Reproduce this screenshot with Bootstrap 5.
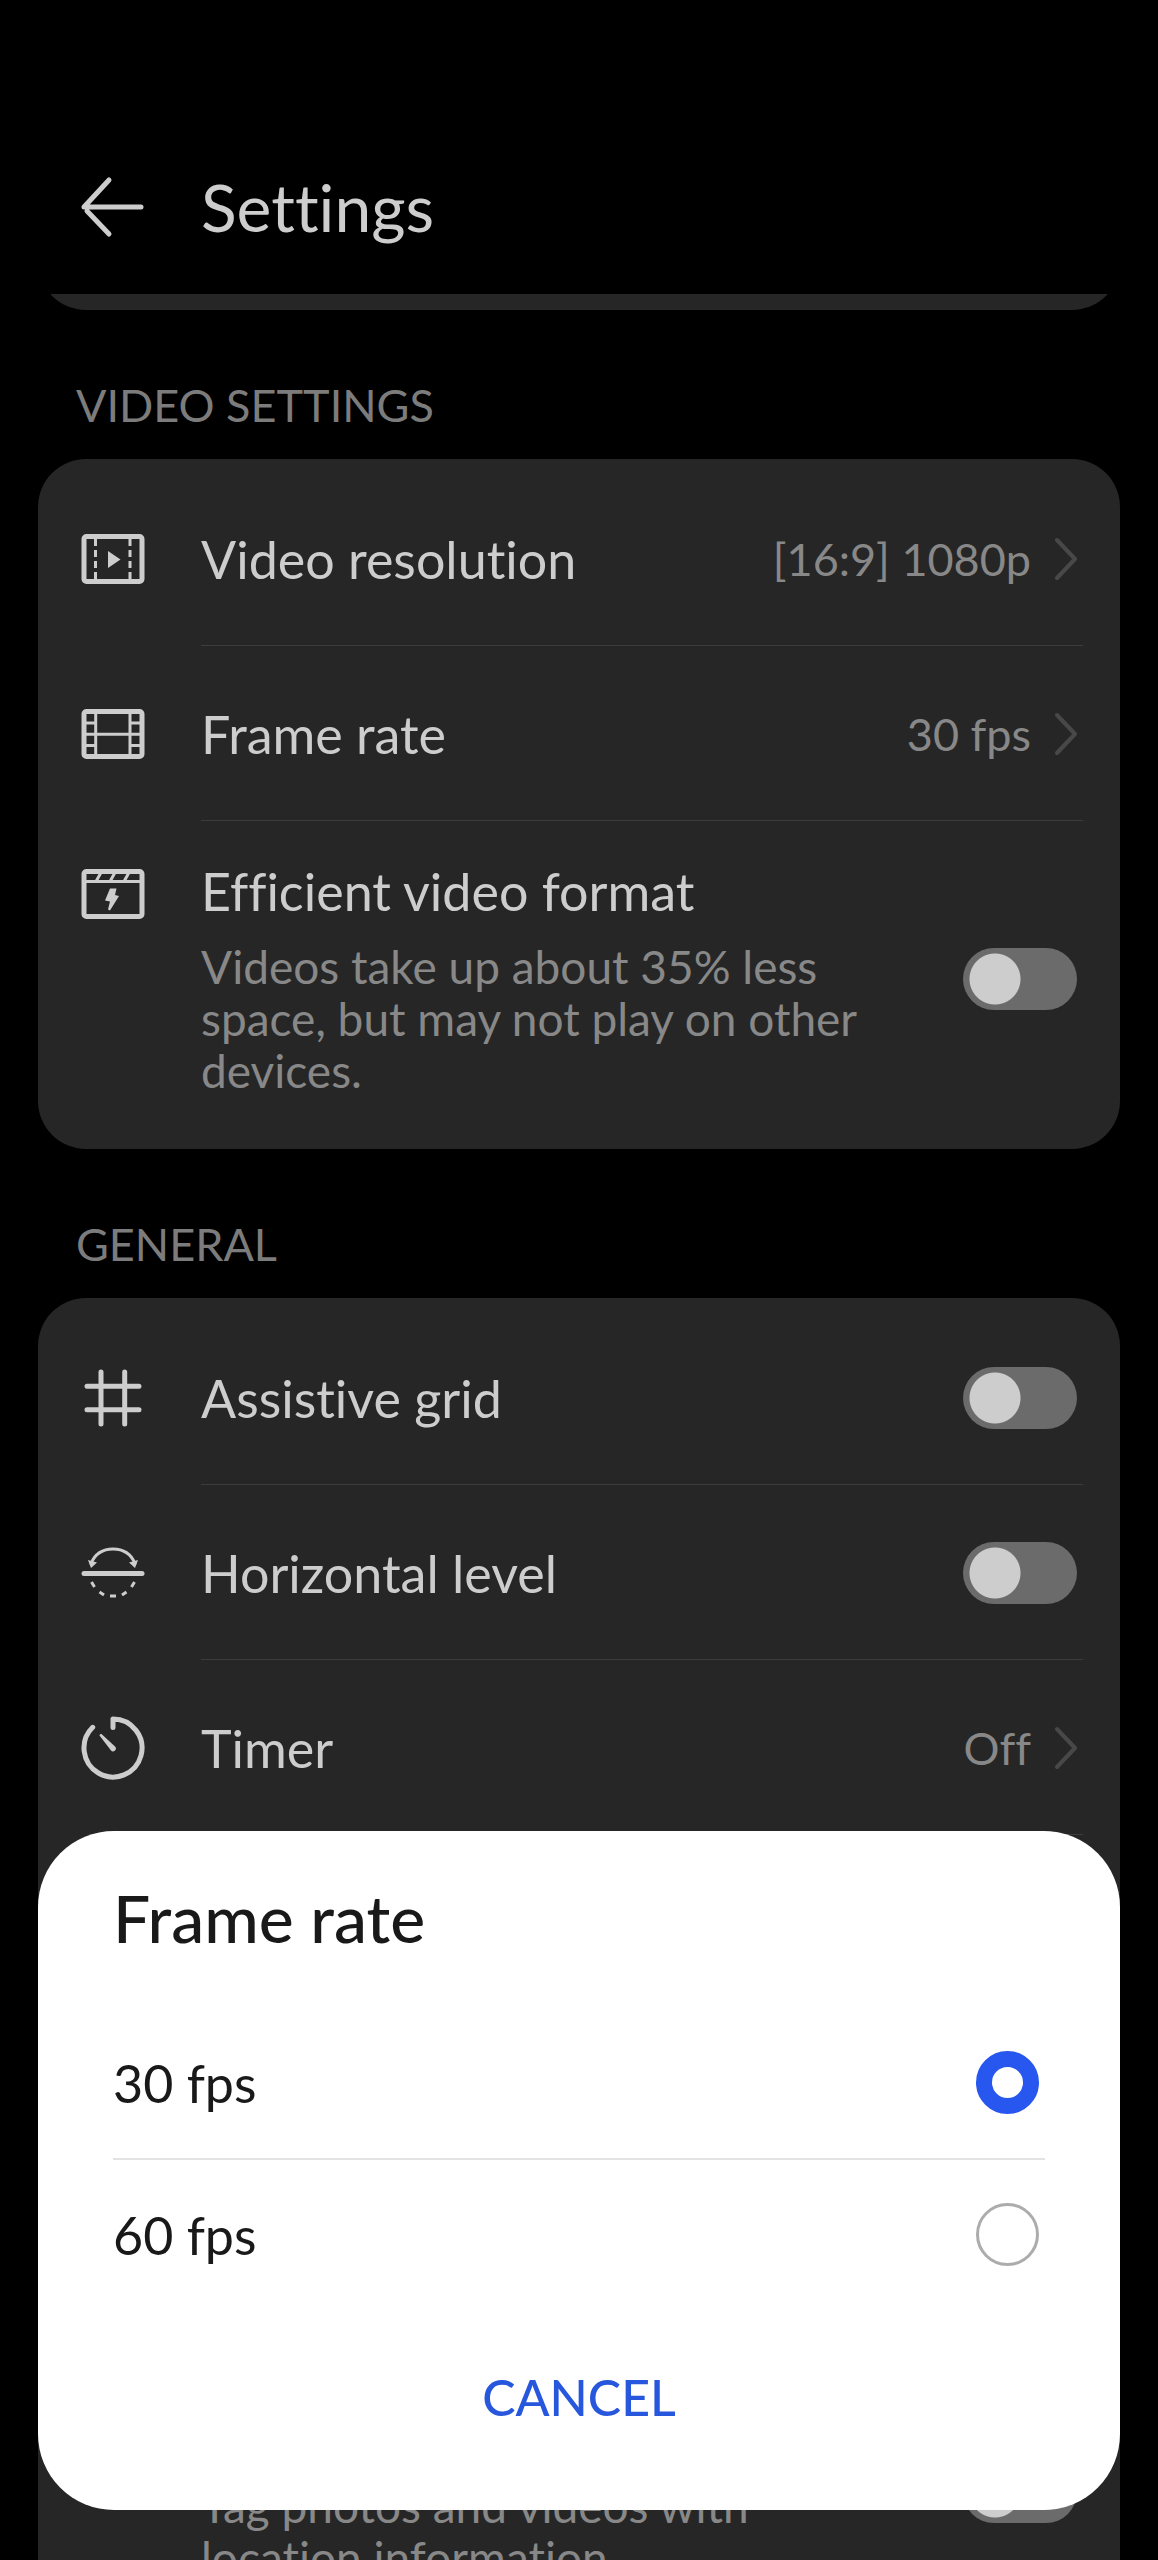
<!DOCTYPE html>
<html lang="en">
<head>
<meta charset="utf-8">
<meta name="viewport" content="width=device-width, initial-scale=1">
<title>Settings</title>
<link href="https://cdn.jsdelivr.net/npm/bootstrap@5.3.0/dist/css/bootstrap.min.css" rel="stylesheet">
<style>
  body { background: #000; color: #cdcdcd; font-family: Lato, "Noto Sans", sans-serif; font-size: 52px; line-height: 60px; }
  body, button { font-variant-ligatures: no-common-ligatures; }
  .app-bar { padding: 119px 81px 0; gap: 56px; height: 294px; }
  .app-title { font-size: 66px; line-height: 80px; font-weight: 400; }
  .panel { background: #262626; border-radius: 48px; margin: 0 38px; padding: 12px 0; }
  .panel-prev { height: 96px; margin-top: -80px; }
  .group-title { color: #7c7c7c; font-size: 45px; line-height: 60px; font-weight: 400; padding: 65px 76px 24px; }
  .setting { padding: 0 37px 0 43px; gap: 56px; }
  .setting-main { min-height: 175px; padding: 2px 6px 0 0; gap: 60px; border: 0; border-bottom: 1px solid #3c3c3c; background: transparent; color: inherit; text-align: left; }
  .setting:last-child .setting-main { border-bottom: 0; }
  .setting-tall .setting-main { padding-top: 40px; padding-bottom: 40px; }
  .setting-tall .glyph { margin-top: 41px; align-self: flex-start; }
  .setting-note { color: #888; font-size: 46px; line-height: 52px; margin-top: 20px; }
  .setting-value { color: #888; font-size: 45px; gap: 24px; }
  .glyph { width: 64px; height: 64px; flex: none; fill: none; stroke: #cdcdcd; stroke-width: 5; stroke-linecap: round; stroke-linejoin: round; }
  .glyph .solid { fill: #cdcdcd; stroke: none; }
  .glyph .thin { stroke-width: 3; stroke-linecap: butt; }
  .chevron { width: 22px; height: 44px; fill: none; stroke: #484848; stroke-width: 4; stroke-linecap: round; stroke-linejoin: round; }
  .form-check-input.toggle { width: 114px; height: 62px; margin: 0; flex: none; border: 0; border-radius: 31px; background: radial-gradient(circle at 32px 31px, #cdcdcd 25px, transparent 26px) #6b6b6b; }
  .sheet { left: 38px; right: 38px; bottom: 50px; background: #fff; color: #191919; border-radius: 76px; padding: 47px 75px 73px; }
  .sheet-title { font-size: 66px; line-height: 80px; font-weight: 500; margin-bottom: 49px; }
  .choice { height: 151px; padding-right: 6px; }
  .choice + .choice { border-top: 2px solid #e3e3e3; }
  .form-check-input.pick { width: 63px; height: 63px; margin: 0; border: 3px solid #acacac; background: #fff; }
  .form-check-input.pick:checked { border: 16px solid #2757ef; background: #fff; }
  .cancel { color: #2757dc; font-size: 50px; line-height: 80px; font-weight: 500; padding: 0; border: 0; margin-top: 48px; }
</style>
</head>
<body>
<div class="vh-100 d-flex flex-column overflow-hidden">
  <header class="app-bar d-flex align-items-center flex-shrink-0">
    <a href="#" class="d-flex" aria-label="Back"><svg class="glyph" viewBox="0 0 64 64"><path d="M60 32H3L28 5M6 36L28 59"/></svg></a>
    <h1 class="app-title m-0">Settings</h1>
  </header>
  <main class="flex-fill overflow-hidden">
    <div class="panel panel-prev"></div>

    <h2 class="group-title m-0">VIDEO SETTINGS</h2>
    <section class="panel">
      <div class="setting d-flex align-items-center">
        <svg class="glyph" viewBox="0 0 64 64"><rect x="3" y="9.500" width="58" height="45" rx="2.500"/><path class="thin" d="M14.500 12v7m0 4v7m0 4v7m0 4v8M49 12v7m0 4v7m0 4v7m0 4v8"/><path class="solid" d="M27 24L39.500 32.500L27 41z"/></svg>
        <button type="button" class="setting-main flex-fill d-flex align-items-center justify-content-between">
          <span>Video resolution</span>
          <span class="setting-value d-flex align-items-center">[16:9] 1080p <svg class="chevron" viewBox="0 0 22 44"><path d="M2 3L20 22L2 41"/></svg></span>
        </button>
      </div>
      <div class="setting d-flex align-items-center">
        <svg class="glyph" viewBox="0 0 64 64"><rect x="3" y="9.500" width="58" height="45" rx="2.500"/><path class="thin" d="M14.700 10v44M49 10v44M4 21h10M49 21h12M4 32.300h57M4 43.500h10M49 43.500h12"/></svg>
        <button type="button" class="setting-main flex-fill d-flex align-items-center justify-content-between">
          <span>Frame rate</span>
          <span class="setting-value d-flex align-items-center">30 fps <svg class="chevron" viewBox="0 0 22 44"><path d="M2 3L20 22L2 41"/></svg></span>
        </button>
      </div>
      <div class="setting setting-tall d-flex align-items-center">
        <svg class="glyph" viewBox="0 0 64 64"><rect x="3" y="9.500" width="58" height="45" rx="2.500"/><path class="thin" d="M4 19.500h56M15 19.500l5-9M29 19.500l5-9M43 19.500l5-9"/><path class="solid" d="M29 26.500h6.500L34 33l4 1L29 48.500L27 47.500L29 39.500L24 38.500z"/></svg>
        <div class="setting-main flex-fill d-flex align-items-center justify-content-between">
          <label for="efficient">Efficient video format<span class="setting-note d-block">Videos take up about 35% less space, but may not play on other devices.</span></label>
          <input class="form-check-input toggle" type="checkbox" role="switch" id="efficient">
        </div>
      </div>
    </section>

    <h2 class="group-title m-0">GENERAL</h2>
    <section class="panel">
      <div class="setting d-flex align-items-center">
        <svg class="glyph" viewBox="0 0 64 64"><path d="M20 6v52M43.700 6v52M6 20.300h52M6 43.700h52"/></svg>
        <div class="setting-main flex-fill d-flex align-items-center justify-content-between">
          <label for="grid">Assistive grid</label>
          <input class="form-check-input toggle" type="checkbox" role="switch" id="grid">
        </div>
      </div>
      <div class="setting d-flex align-items-center">
        <svg class="glyph" viewBox="0 0 64 64"><path d="M3 32.500h58"/><path stroke-width="3" d="M10 22.500C14 13 22 8 32 8s18 5 22 14.500"/><path class="solid" d="M7 19l9 2.500L10 27zM57 19l-9 2.500L54 27z"/><path class="thin" d="M10.500 41l3 5M18.500 51l4.500 3M29 55h6M41 54l4.500-3M50.500 46l3-5"/></svg>
        <div class="setting-main flex-fill d-flex align-items-center justify-content-between">
          <label for="level">Horizontal level</label>
          <input class="form-check-input toggle" type="checkbox" role="switch" id="level">
        </div>
      </div>
      <div class="setting d-flex align-items-center">
        <svg class="glyph" viewBox="0 0 64 64"><path d="M32 11.500V3A29 29 0 1 1 11.700 11.300"/><path class="solid" d="M18.500 19.500Q18.500 17.500 20.500 18L34 30.500A2.700 2.700 0 0 1 30 34.500z"/></svg>
        <button type="button" class="setting-main flex-fill d-flex align-items-center justify-content-between">
          <span>Timer</span>
          <span class="setting-value d-flex align-items-center">Off <svg class="chevron" viewBox="0 0 22 44"><path d="M2 3L20 22L2 41"/></svg></span>
        </button>
      </div>
      <div class="setting d-flex"><span class="glyph"></span><div class="setting-main flex-fill"></div></div>
      <div class="setting d-flex"><span class="glyph"></span><div class="setting-main flex-fill"></div></div>
      <div class="setting d-flex"><span class="glyph"></span><div class="setting-main flex-fill"></div></div>
      <div class="setting setting-tall d-flex">
        <span class="glyph"></span>
        <div class="setting-main flex-fill d-flex align-items-center justify-content-between">
          <label for="gps">GPS tag<span class="setting-note d-block">Tag photos and videos with location information.</span></label>
          <input class="form-check-input toggle" type="checkbox" role="switch" id="gps">
        </div>
      </div>
    </section>
  </main>
</div>

<form class="sheet position-fixed" role="dialog" aria-labelledby="sheetTitle">
  <h2 class="sheet-title" id="sheetTitle">Frame rate</h2>
  <div class="choice d-flex align-items-center justify-content-between">
    <label for="fps30">30 fps</label>
    <input class="form-check-input pick" type="radio" name="fps" id="fps30" checked>
  </div>
  <div class="choice d-flex align-items-center justify-content-between">
    <label for="fps60">60 fps</label>
    <input class="form-check-input pick" type="radio" name="fps" id="fps60">
  </div>
  <button type="button" class="cancel btn d-block w-100">CANCEL</button>
</form>
<script src="https://cdn.jsdelivr.net/npm/bootstrap@5.3.0/dist/js/bootstrap.bundle.min.js"></script>
</body>
</html>
